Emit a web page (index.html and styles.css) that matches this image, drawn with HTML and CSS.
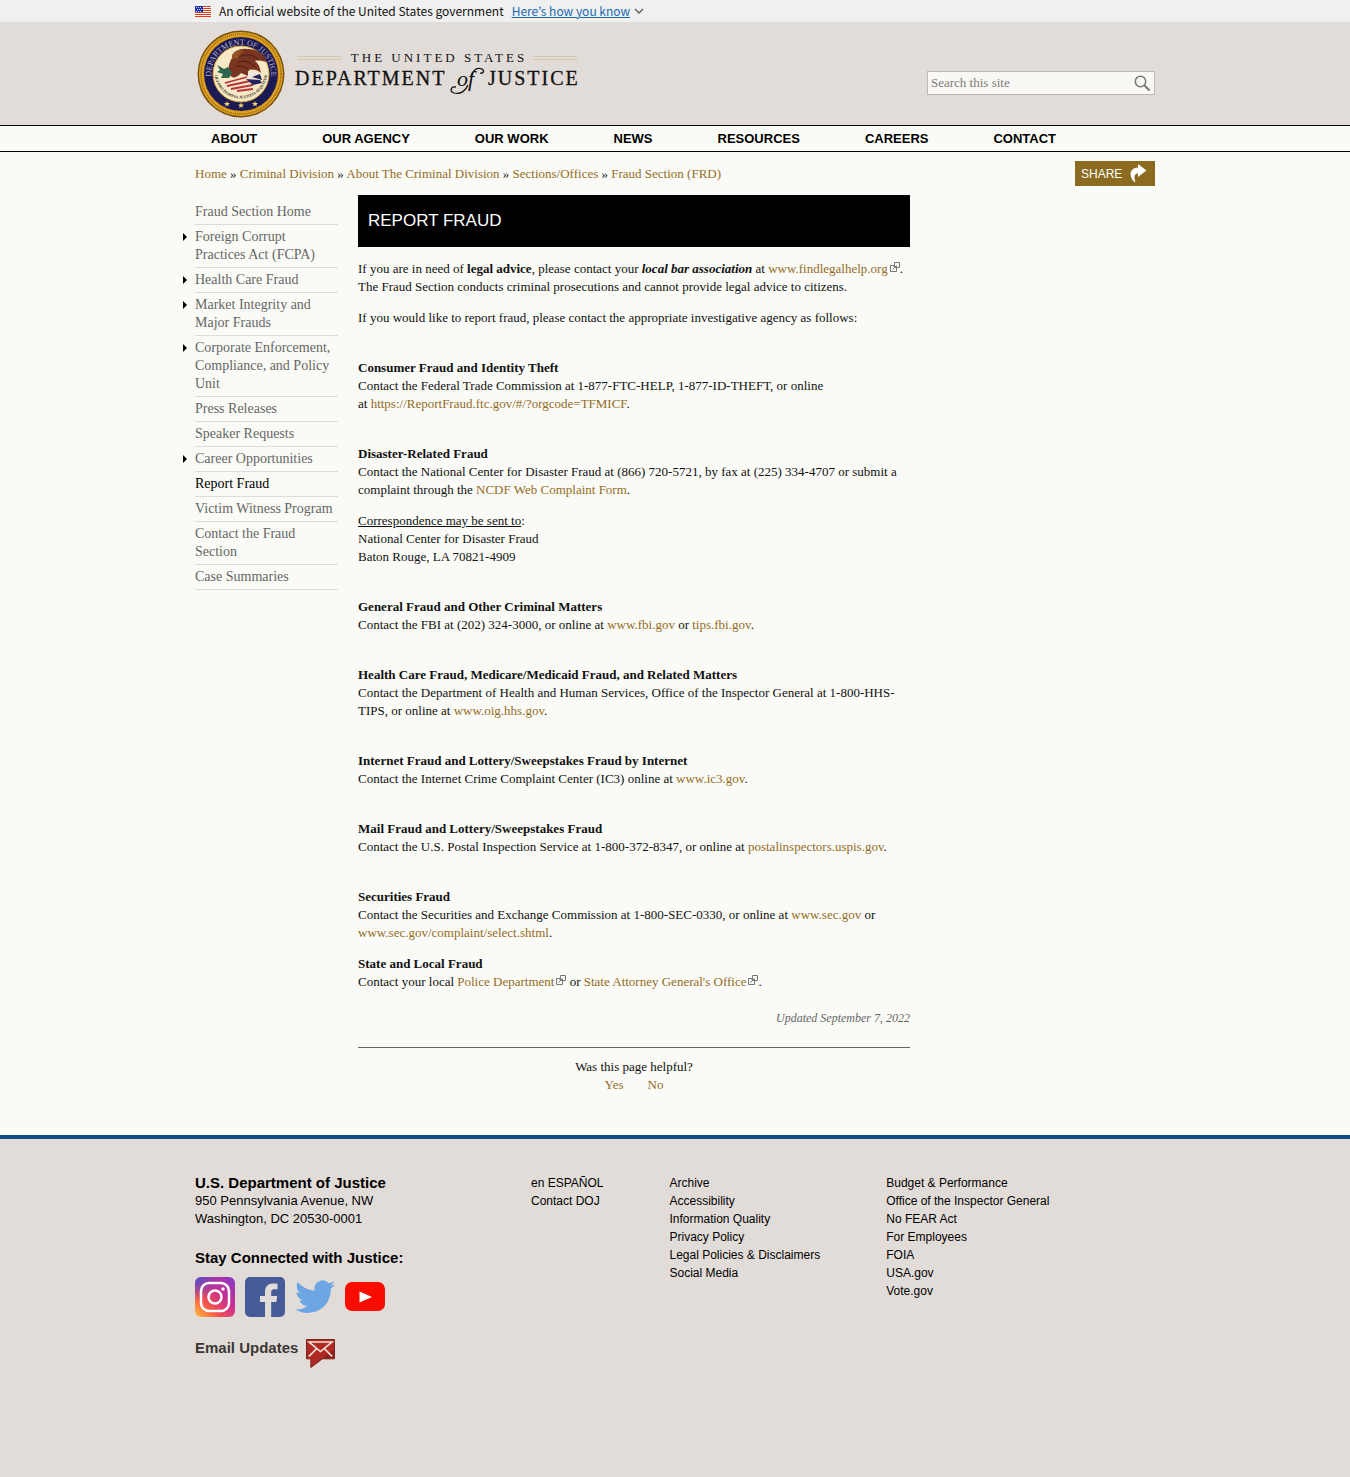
FILE: index.html
```html
<!DOCTYPE html>
<html lang="en">
<head>
<meta charset="utf-8">
<meta name="viewport" content="width=device-width, initial-scale=1">
<title>Report Fraud | Department of Justice</title>
<link rel="stylesheet" href="styles.css">
</head>
<body>
<svg class="defs" width="0" height="0" aria-hidden="true">
  <symbol id="external" viewBox="0 0 10 10">
    <path d="M4.500 .5h5v5h-5zM4.500 3.500H.5v6h6V5.500M2.500 7.500l4-4M3.500 4.500h3v3" fill="none" stroke="#777" stroke-width="1"/>
  </symbol>
</svg>

<section class="banner" aria-label="Official government website">
  <div class="wrap banner-inner">
    <svg class="flag" viewBox="0 0 16 11" aria-hidden="true">
      <path fill="#fff" d="M0 0h16v11H0z"/>
      <path fill="#db3e1f" d="M7 0h9v1H7zM7 2h9v1H7zM7 4h9v1H7zM0 6h16v1H0zM0 8h16v1H0zM0 10h16v1H0z"/>
      <path fill="#1e33b1" d="M0 0h8v6H0z"/>
      <path stroke="#fff" stroke-dasharray="1 1" d="M1 1.500h6M2 3.500h5M1 5.500h6" opacity=".8"/>
    </svg>
    <span>An official website of the United States government</span>
    <a class="banner-link" href="#know">Here’s how you know</a>
    <svg class="chevron" viewBox="0 0 10 10" aria-hidden="true"><path d="M1 3l4 4 4-4" fill="none" stroke="#666" stroke-width="1.500"/></svg>
  </div>
</section>

<header class="header">
  <div class="wrap header-inner">
    <a class="logo" href="#home" aria-label="The United States Department of Justice">
      <svg class="seal" viewBox="0 0 92 92" aria-hidden="true">
        <defs>
          <path id="ring" d="M17.800 57A30 30 0 1 1 74.200 57"/>
          <path id="motto" d="M19.500 44A26.500 26.500 0 0 0 72.500 44"/>
        </defs>
        <circle cx="46" cy="46" r="43.500" fill="#7a5312"/>
        <circle cx="46" cy="46" r="42" fill="#e3a520"/>
        <circle cx="46" cy="46" r="40" fill="none" stroke="#8a5c10" stroke-width="1.500" stroke-dasharray="1 1"/>
        <circle cx="46" cy="46" r="38.500" fill="#d99a1d"/>
        <circle cx="46" cy="46" r="37" fill="#1c1a55"/>
        <circle cx="46" cy="46" r="28" fill="#f6eac6" stroke="#d9a83a" stroke-width="1"/>
        <text class="seal-ring"><textPath href="#ring" startOffset="50%">DEPARTMENT OF JUSTICE</textPath></text>
        <text class="seal-motto"><textPath href="#motto" startOffset="50%">QUI PRO DOMINA JUSTITIA SEQUITUR</textPath></text>
        <path d="M30 55l22-6M32 58l23-5M36 61l22-4M42 63l16-2" stroke="#b6323c" stroke-width="1.800"/>
        <path d="M51 51l14 1 2 3-9 2z" fill="#24225c"/>
        <path d="M52 49l15 3-7-8-10 0z" fill="#eee7e2"/>
        <path d="M57 49l10 3-2-6z" fill="#24225c"/>
        <path d="M37 30c2-7 8-10 15-9 10 0 18 5 20 13-5-1-9-2-12-1 4 3 5 7 6 12-5-4-9-4-13-3l0 6-7-3c-4 5-9 6-11 2-3-5-1-12 2-17z" fill="#7a3520"/>
        <path d="M37 27c3-5 8-6 12-4-3 1-5 3-5 7l-7 1z" fill="#95502a"/>
        <path d="M44 29c7-4 15-2 20 3M43 34c7-2 12 0 17 5M42 38c5 0 9 1 12 5" fill="none" stroke="#4b1c13" stroke-width="1"/>
        <path d="M22 37l7 4 4-2 4 6-3 5-8 0 2-4-6-2 3-2z" fill="#2c6650"/>
        <path d="M46 69.500l.8 2h2.200l-1.700 1.400.6 2.200-1.900-1.300-1.900 1.300.6-2.200-1.700-1.400h2.200zM32 68l.8 2H35l-1.700 1.400.6 2.200-1.900-1.300-1.900 1.300.6-2.200L29 70h2.200zM60 68l.8 2H63l-1.700 1.400.6 2.200-1.900-1.300-1.900 1.300.6-2.200L57 70h2.200z" transform="translate(0 5)" fill="#f3d272"/>
      </svg>
      <svg class="wordmark" viewBox="0 0 290 50" aria-hidden="true">
        <path d="M2 8.500h44M2 11.500h44M238 8.500h44M238 11.500h44" stroke="#d3c8ab"/>
        <text class="mark-small" x="144" y="14" text-anchor="middle">THE UNITED STATES</text>
        <text class="mark-large" x="0" y="37">DEPARTMENT</text>
        <text class="mark-large" x="193" y="37">JUSTICE</text>
        <text class="mark-of" x="162" y="38">of</text>
        <path d="M176 28c2-6 6-9 11-7 3 2 1 5-2 4M173 37c-2 5-7 10-14 8-5-2-3-7 2-6" fill="none" stroke="#111" stroke-width="1.300"/>
      </svg>
    </a>
    <form class="search" role="search">
      <input type="search" placeholder="Search this site" aria-label="Search this site">
      <button type="button" aria-label="Search">
        <svg viewBox="0 0 16 16" aria-hidden="true"><circle cx="6.500" cy="6.500" r="5.200" fill="none" stroke="#777" stroke-width="1.500"/><path d="M10.500 10.500l5 5" stroke="#777" stroke-width="2"/></svg>
      </button>
    </form>
  </div>
</header>

<nav class="nav" aria-label="Main">
  <div class="wrap nav-inner">
    <a href="#about">ABOUT</a><a href="#agency">OUR AGENCY</a><a href="#work">OUR WORK</a><a href="#news">NEWS</a><a href="#resources">RESOURCES</a><a href="#careers">CAREERS</a><a href="#contact">CONTACT</a>
  </div>
</nav>

<div class="wrap crumb-row">
  <nav aria-label="Breadcrumb"><a href="#home">Home</a> » <a href="#crm">Criminal Division</a> » <a href="#about-crm">About The Criminal Division</a> » <a href="#sections">Sections/Offices</a> » <a href="#frd">Fraud Section (FRD)</a></nav>
  <button class="share" type="button">SHARE
    <svg viewBox="0 0 18 20" aria-hidden="true"><path d="M9 0l8.500 6.500L9 13V9.500C5.500 9.500 4.500 13 6.500 18.500 0 15 -1 4 9 3.500z" fill="#fff"/></svg>
  </button>
</div>

<div class="wrap content">
  <nav class="side" aria-label="Fraud Section">
    <ul>
      <li><a href="#s1">Fraud Section Home</a></li>
      <li class="more"><a href="#s2">Foreign Corrupt Practices Act (FCPA)</a></li>
      <li class="more"><a href="#s3">Health Care Fraud</a></li>
      <li class="more"><a href="#s4">Market Integrity and Major Frauds</a></li>
      <li class="more"><a href="#s5">Corporate Enforcement, Compliance, and Policy Unit</a></li>
      <li><a href="#s6">Press Releases</a></li>
      <li><a href="#s7">Speaker Requests</a></li>
      <li class="more"><a href="#s8">Career Opportunities</a></li>
      <li><a class="current" href="#s9" aria-current="page">Report Fraud</a></li>
      <li><a href="#s10">Victim Witness Program</a></li>
      <li><a href="#s11">Contact the Fraud Section</a></li>
      <li><a href="#s12">Case Summaries</a></li>
    </ul>
  </nav>

  <main class="main">
    <h1>REPORT FRAUD</h1>
    <p>If you are in need of <strong>legal advice</strong>, please contact your <strong><em>local bar association</em></strong> at <a href="#help">www.findlegalhelp.org<svg class="ext" aria-hidden="true"><use href="#external"/></svg></a>. The Fraud Section conducts criminal prosecutions and cannot provide legal advice to citizens.</p>
    <p>If you would like to report fraud, please contact the appropriate investigative agency as follows:</p>
    <section>
      <h2>Consumer Fraud and Identity Theft</h2>
      <p>Contact the Federal Trade Commission at 1-877-FTC-HELP, 1-877-ID-THEFT, or online at&nbsp;<a href="#ftc">https://ReportFraud.ftc.gov/#/?orgcode=TFMICF</a>.</p>
    </section>
    <section>
      <h2>Disaster-Related Fraud</h2>
      <p>Contact the National Center for Disaster Fraud at (866) 720-5721, by fax at (225) 334-4707 or submit a complaint through the <a href="#ncdf">NCDF Web Complaint Form</a>.</p>
      <p><u>Correspondence may be sent to</u>:<br>National Center for Disaster Fraud<br>Baton Rouge, LA 70821-4909</p>
    </section>
    <section>
      <h2>General Fraud and Other Criminal Matters</h2>
      <p>Contact the FBI at (202) 324-3000, or online at <a href="#fbi">www.fbi.gov</a> or <a href="#tips">tips.fbi.gov</a>.</p>
    </section>
    <section>
      <h2>Health Care Fraud, Medicare/Medicaid Fraud, and Related Matters</h2>
      <p>Contact the Department of Health and Human Services, Office of the Inspector General at 1-800-HHS-TIPS, or online at <a href="#oig">www.oig.hhs.gov</a>.</p>
    </section>
    <section>
      <h2>Internet Fraud and Lottery/Sweepstakes Fraud by Internet</h2>
      <p>Contact the Internet Crime Complaint Center (IC3) online at <a href="#ic3">www.ic3.gov</a>.</p>
    </section>
    <section>
      <h2>Mail Fraud and Lottery/Sweepstakes Fraud</h2>
      <p>Contact the U.S. Postal Inspection Service at 1-800-372-8347, or online at <a href="#uspis">postalinspectors.uspis.gov</a>.</p>
    </section>
    <section>
      <h2>Securities Fraud</h2>
      <p>Contact the Securities and Exchange Commission at 1-800-SEC-0330, or online at <a href="#sec">www.sec.gov</a> or <a href="#sec2">www.sec.gov/complaint/select.shtml</a>.</p>
    </section>
    <section class="close">
      <h2>State and Local Fraud</h2>
      <p>Contact your local <a href="#police">Police Department<svg class="ext" aria-hidden="true"><use href="#external"/></svg></a> or <a href="#ag">State Attorney General's Office<svg class="ext" aria-hidden="true"><use href="#external"/></svg></a>.</p>
    </section>
    <p class="updated">Updated September 7, 2022</p>
    <div class="helpful">
      <p>Was this page helpful?</p>
      <div class="answers"><a href="#yes">Yes</a><a href="#no">No</a></div>
    </div>
  </main>
</div>

<footer class="footer">
  <div class="wrap footer-inner">
    <div class="contact">
      <h2>U.S. Department of Justice</h2>
      <address>950 Pennsylvania Avenue, NW<br>Washington, DC 20530-0001</address>
      <h2 class="stay">Stay Connected with Justice:</h2>
      <div class="social">
        <a href="#instagram" aria-label="Instagram"><svg viewBox="0 0 40 40">
          <defs>
            <linearGradient id="ig" x1="0" y1="1" x2="1" y2="0"><stop offset="0" stop-color="#ffc13b"/><stop offset=".3" stop-color="#f8554a"/><stop offset=".6" stop-color="#cb2f91"/><stop offset="1" stop-color="#803bc5"/></linearGradient>
            <radialGradient id="igblue" cx="0" cy="0" r=".6"><stop offset="0" stop-color="#4650cf"/><stop offset="1" stop-color="#4650cf" stop-opacity="0"/></radialGradient>
          </defs>
          <rect width="40" height="40" rx="6" fill="url(#ig)"/><rect width="40" height="40" rx="6" fill="url(#igblue)"/>
          <rect x="6" y="6" width="28" height="28" rx="8" fill="none" stroke="#fff" stroke-width="2.500"/>
          <circle cx="20" cy="20" r="6.500" fill="none" stroke="#fff" stroke-width="2.500"/><circle cx="28" cy="12" r="1.700" fill="#fff"/></svg></a>
        <a href="#facebook" aria-label="Facebook"><svg viewBox="0 0 40 40"><rect width="40" height="40" rx="5" fill="#455a97"/><path d="M20 40V25h-5v-6h5v-4c0-5.500 3-8.500 8-8.500 2 0 3.500.1 4.500.3v5.400h-3c-2.500 0-3.300 1.200-3.300 3.200V19h6l-.8 6h-5.200v15z" fill="#e2dcd8"/></svg></a>
        <a href="#twitter" aria-label="Twitter"><svg viewBox="0 0 40 40"><path d="M40 7.400c-1.500.7-3 1.100-4.700 1.300 1.700-1 3-2.600 3.600-4.500-1.600.9-3.300 1.600-5.200 2A8.200 8.200 0 0 0 19.700 13.700C12.900 13.300 6.900 10.100 2.800 5.100c-2.200 3.700-1.100 8.500 2.500 10.900-1.300 0-2.600-.4-3.700-1 0 3.800 2.600 7.300 6.600 8.100-1.200.3-2.500.4-3.700.1 1 3.300 4.100 5.600 7.700 5.700A16.500 16.500 0 0 1 0 32.300a23.300 23.300 0 0 0 35.900-20.700c1.600-1.100 3-2.600 4.100-4.200z" fill="#6ea6e4"/></svg></a>
        <a href="#youtube" aria-label="YouTube"><svg viewBox="0 0 40 40"><rect y="5" width="40" height="29" rx="7" fill="#f80d00"/><path d="M14.500 14.500v11L27 20z" fill="#fff"/></svg></a>
      </div>
      <a class="email" href="#email">Email Updates
        <svg viewBox="0 0 30 30" aria-hidden="true"><path d="M.5.500h29v20H17L5 29.500 5 20.500H.5z" fill="#ae2a22" stroke="#74201a"/><path d="M5 28l12-8h12v-9z" fill="#8e211b"/><path d="M3 3h24L15 13zM3 18l8-8M27 18l-8-8" fill="none" stroke="#f2e3dc" stroke-width="1.600"/></svg>
      </a>
    </div>
    <div class="links">
      <ul><li><a href="#es" lang="es">en ESPAÑOL</a></li><li><a href="#cdoj">Contact DOJ</a></li></ul>
      <ul><li><a href="#f1">Archive</a></li><li><a href="#f2">Accessibility</a></li><li><a href="#f3">Information Quality</a></li><li><a href="#f4">Privacy Policy</a></li><li><a href="#f5">Legal Policies &amp; Disclaimers</a></li><li><a href="#f6">Social Media</a></li></ul>
      <ul><li><a href="#f7">Budget &amp; Performance</a></li><li><a href="#f8">Office of the Inspector General</a></li><li><a href="#f9">No FEAR Act</a></li><li><a href="#f10">For Employees</a></li><li><a href="#f11">FOIA</a></li><li><a href="#f12">USA.gov</a></li><li><a href="#f13">Vote.gov</a></li></ul>
    </div>
  </div>
</footer>
</body>
</html>
```

FILE: styles.css
```css
* { box-sizing: border-box; }

body {
  display: flex;
  flex-direction: column;
  min-height: 100vh;
  margin: 0;
  background: #fafbf6;
  color: #111;
  font: 13px/18px "Liberation Serif", "Times New Roman", serif;
}

h1, h2, p, ul, address { margin: 0; padding: 0; }
ul { list-style: none; }
a { color: #946c27; text-decoration: none; }
svg { display: block; flex: none; }
.defs { position: absolute; }

.wrap {
  width: 100%;
  max-width: 960px;
  margin: 0 auto;
}

/* Government banner */
.banner { background: #f0f0f0; }
.banner-inner {
  display: flex;
  align-items: center;
  height: 22px;
  font: 12px/22px "Noto Sans CJK KR", sans-serif;
}
.flag { width: 16px; height: 11px; margin-right: 8px; }
.banner-link { margin: 0 4px 0 8px; color: #1b6ab0; text-decoration: underline; }
.chevron { width: 10px; height: 10px; }

/* Header */
.header { background: #e2dcd8; }
.header-inner {
  display: flex;
  justify-content: space-between;
  align-items: flex-start;
  min-height: 103px;
  padding-top: 6px;
}
.logo { display: flex; gap: 8px; }
.seal { width: 92px; height: 92px; }
.wordmark { width: 290px; height: 50px; margin-top: 20px; }
.seal-ring, .seal-motto {
  fill: #b9b3c4;
  font: 8px "Liberation Serif", serif;
  text-anchor: middle;
}
.seal-motto { fill: #3a3224; font-size: 4px; font-weight: bold; }
.mark-small, .mark-large, .mark-of { fill: #111; font-family: "Liberation Serif", serif; }
.mark-small { font-size: 13px; letter-spacing: 3px; }
.mark-large { font-size: 20px; letter-spacing: 2px; stroke: #111; stroke-width: .3px; }
.mark-of { font-size: 22px; font-style: italic; }

.search {
  display: flex;
  align-items: center;
  width: 228px;
  height: 24px;
  margin-top: 43px;
  border: 1px solid #bdb8b2;
  background: #faf8f4;
}
.search input {
  flex: 1;
  min-width: 0;
  padding: 0 3px;
  border: 0;
  background: none;
  font: inherit;
}
.search input::placeholder { color: #7c7c78; }
.search button { padding: 0; margin-right: 4px; border: 0; background: none; }
.search svg { width: 16px; height: 16px; }

/* Main navigation */
.nav { border: solid #000; border-width: 1px 0; }
.nav-inner {
  display: flex;
  gap: 65px;
  height: 25px;
  padding: 0 16px;
  font: bold 13px/26px "Liberation Sans", Arial, sans-serif;
}
.nav a { color: #000; }

.crumb-row {
  display: flex;
  justify-content: space-between;
  align-items: center;
  padding: 9px 0;
}
.share {
  display: flex;
  align-items: center;
  justify-content: space-between;
  width: 80px;
  height: 25px;
  padding: 0 8px 0 6px;
  border: 0;
  background: #8b6b20;
  color: #fff;
  font: 12px "Liberation Sans", Arial, sans-serif;
}
.share svg { width: 18px; height: 20px; }

/* Two-column content */
.content {
  display: grid;
  grid-template-columns: 143px minmax(0, 552px);
  gap: 20px;
  padding-bottom: 41px;
}
.side { padding-top: 5px; font-size: 14px; }
.side li { position: relative; padding: 3px 0; border-bottom: 1px solid #ddd; }
.side a { display: block; color: #666; }
.side .current { color: #000; }
.side .more::before {
  content: "";
  position: absolute;
  top: 8px;
  left: -12px;
  border: solid transparent;
  border-width: 4px 0 4px 4px;
  border-left-color: #000;
}

.main h1 {
  margin-bottom: 13px;
  padding: 0 10px;
  background: #000;
  color: #fff;
  font: 17px/52px "Liberation Sans", Arial, sans-serif;
}
.main p { margin-bottom: 13px; }
.main section { margin-top: 32px; }
.main section.close { margin-top: 13px; }
.main h2 { font-size: 13px; line-height: 18px; }
.ext { display: inline-block; width: 10px; height: 10px; margin-left: 2px; vertical-align: 1px; }
.main .updated {
  margin: 18px 0 20px;
  color: #666;
  font-size: 12px;
  font-style: italic;
  text-align: right;
}
.helpful { padding-top: 10px; border-top: 1px solid #666; text-align: center; }
.helpful p { margin: 0; }
.answers { display: flex; justify-content: center; gap: 24px; }

/* Footer */
.footer {
  flex: 1;
  border-top: 4px solid #0c4e85;
  background: #e2dcd8;
  color: #000;
  font: 12px/18px "Liberation Sans", Arial, sans-serif;
}
.footer-inner { display: flex; padding: 35px 0; }
.footer a { color: #000; }
.contact { width: 35%; }
.contact h2 { font-size: 15px; line-height: 18px; }
.contact address { font-size: 13px; font-style: normal; }
.contact .stay { margin: 21px 0 10px; }
.social { display: flex; gap: 10px; }
.social svg { width: 40px; height: 40px; }
.contact .email {
  display: flex;
  align-items: flex-start;
  gap: 8px;
  margin-top: 22px;
  color: #3b3734;
  font-size: 15px;
  font-weight: bold;
}
.email svg { width: 29px; height: 29px; }
.links { display: flex; gap: 66px; }
```
